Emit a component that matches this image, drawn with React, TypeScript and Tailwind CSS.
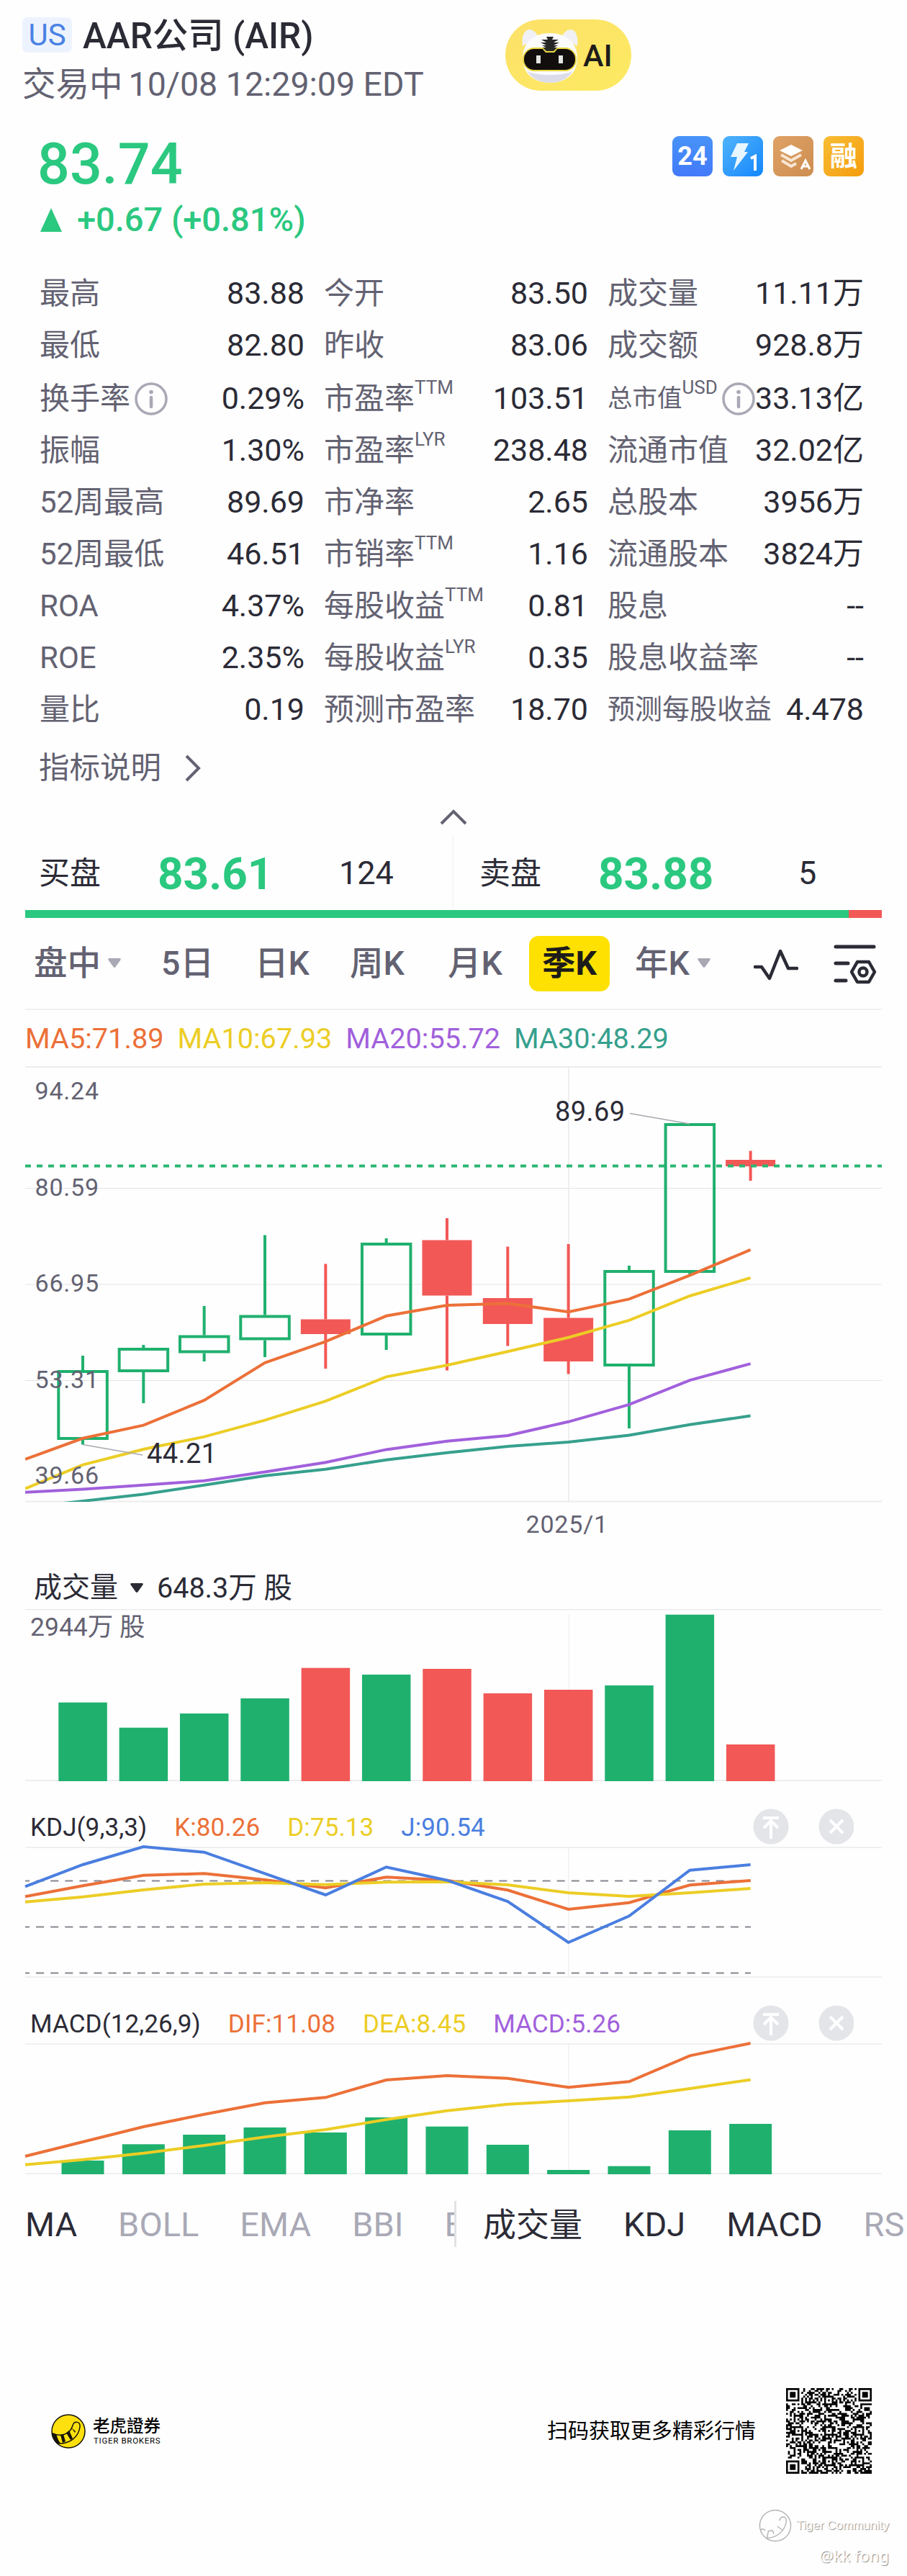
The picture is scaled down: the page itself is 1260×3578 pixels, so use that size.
import type { ReactNode } from "react";

const GREEN = "#1fb06e";
const RED = "#f25856";
const ORANGE = "#ec7038";
const YELLOW = "#eccd25";
const PURPLE = "#a160dc";
const TEAL = "#36a08d";
const BLUE = "#4a7ee0";

// x of every quarter, the first point is the clipped left edge of the chart
const centers = Array.from({ length: 12 }, (_, i) => 115 + i * 84.33);
const lineXs = [35, ...centers];

const toPoints = (ys: number[]) =>
  ys.map((y, i) => `${lineXs[i].toFixed(1)},${y}`).join(" ");

interface Stat {
  label: string;
  sup?: string;
  value: string;
  info?: boolean;
  size?: string;
}

const stats: Stat[][] = [
  [
    { label: "最高", value: "83.88" },
    { label: "今开", value: "83.50" },
    { label: "成交量", value: "11.11万" },
  ],
  [
    { label: "最低", value: "82.80" },
    { label: "昨收", value: "83.06" },
    { label: "成交额", value: "928.8万" },
  ],
  [
    { label: "换手率", value: "0.29%", info: true },
    { label: "市盈率", sup: "TTM", value: "103.51" },
    { label: "总市值", sup: "USD", value: "33.13亿", info: true, size: "text-[34.5px]" },
  ],
  [
    { label: "振幅", value: "1.30%" },
    { label: "市盈率", sup: "LYR", value: "238.48" },
    { label: "流通市值", value: "32.02亿" },
  ],
  [
    { label: "52周最高", value: "89.69" },
    { label: "市净率", value: "2.65" },
    { label: "总股本", value: "3956万" },
  ],
  [
    { label: "52周最低", value: "46.51" },
    { label: "市销率", sup: "TTM", value: "1.16" },
    { label: "流通股本", value: "3824万" },
  ],
  [
    { label: "ROA", value: "4.37%" },
    { label: "每股收益", sup: "TTM", value: "0.81" },
    { label: "股息", value: "--" },
  ],
  [
    { label: "ROE", value: "2.35%" },
    { label: "每股收益", sup: "LYR", value: "0.35" },
    { label: "股息收益率", value: "--" },
  ],
  [
    { label: "量比", value: "0.19" },
    { label: "预测市盈率", value: "18.70" },
    { label: "预测每股收益", value: "4.478", size: "text-[38px]" },
  ],
];

// wick top, body top, body bottom, wick bottom
const candles: { up: boolean; y: [number, number, number, number] }[] = [
  { up: true, y: [1883, 1903, 2000, 2006.5] },
  { up: true, y: [1868, 1872, 1906, 1949] },
  { up: true, y: [1814, 1854.5, 1879.5, 1891] },
  { up: true, y: [1715.5, 1826.5, 1861.5, 1885] },
  { up: false, y: [1755.5, 1832.5, 1853, 1901] },
  { up: true, y: [1720, 1726, 1855, 1875] },
  { up: false, y: [1692, 1722.5, 1799.5, 1903.5] },
  { up: false, y: [1731.5, 1803, 1839, 1869.5] },
  { up: false, y: [1728, 1830.5, 1891, 1908.5] },
  { up: true, y: [1758, 1764, 1898, 1984] },
  { up: true, y: [1560, 1560, 1768, 1770.5] },
  { up: false, y: [1598.5, 1611, 1620, 1640] },
];

const ma5 = [2026.8, 1997.8, 1979.6, 1944.9, 1892.8, 1863.3, 1827.8, 1813, 1810.4, 1822.2, 1804.4, 1771.4, 1735.9];
const ma10 = [2067.6, 2034.6, 2013, 1995.6, 1972.6, 1946.2, 1912.4, 1896.3, 1877.2, 1857.7, 1833.9, 1800, 1774.9];
const ma20 = [2072.8, 2068.5, 2062.8, 2056.8, 2044.6, 2031.2, 2013.4, 2001.7, 1993.9, 1974.8, 1950.9, 1917.1, 1894.1];
const ma30 = [2094, 2085, 2075.4, 2062.8, 2049.8, 2040.7, 2027.7, 2017.7, 2009, 2003, 1993.4, 1978.7, 1966.6];

const volumes = [
  { top: 2364.7, up: true },
  { top: 2399.7, up: true },
  { top: 2380, up: true },
  { top: 2359, up: true },
  { top: 2316.7, up: false },
  { top: 2326, up: true },
  { top: 2318, up: false },
  { top: 2352, up: false },
  { top: 2347, up: false },
  { top: 2341, up: true },
  { top: 2242.7, up: true },
  { top: 2423, up: false },
];

const kLine = [2634.3, 2619.3, 2604.7, 2602.3, 2611, 2622.3, 2607.3, 2611.7, 2625.3, 2652, 2642.7, 2618.3, 2612];
const dLine = [2641.7, 2634.7, 2625, 2617, 2615, 2617.7, 2614.3, 2613.7, 2618, 2629, 2634, 2629, 2623];
const jLine = [2620.3, 2590, 2565, 2572.7, 2602.3, 2632, 2593.3, 2611.7, 2641, 2698, 2661.3, 2597.7, 2590];

const dif = [2995, 2975, 2954, 2936.7, 2920.7, 2913.3, 2889, 2883, 2886.7, 2899.3, 2891.3, 2855.3, 2838];
const dea = [3006.7, 2999.7, 2990.7, 2980, 2968.3, 2958, 2944, 2931.7, 2922.7, 2918, 2912.7, 2901, 2888.7];
const macdBars = [3001, 2978.3, 2965, 2955, 2962, 2941, 2953.7, 2979, 3014, 3008.7, 2959, 2950];

function App() {
  return (
    <div className="flex h-[3578px] w-[1260px] flex-col overflow-hidden bg-[#fefefe] font-['Roboto','Noto_Sans_CJK_SC',sans-serif] whitespace-nowrap text-[#2b2b36]">
      <Header />
      <Price />
      <Stats />
      <BidAsk />
      <PeriodTabs />
      <CandleChart />
      <VolumeChart />
      <KdjChart />
      <MacdChart />
      <IndicatorTabs />
      <Footer />
    </div>
  );
}

function Header() {
  return (
    <header className="flex h-[160px] items-start pl-[31px]">
      <div className="w-[671px] pt-[24px]">
        <div className="flex h-[49px] items-center gap-[15px]">
          <span className="flex h-[49px] w-[69px] items-center justify-center rounded-[7px] bg-[#edf3fe] text-[42px] text-[#4a82e4]">
            US
          </span>
          <h1 className="pt-[4px] text-[49.5px] leading-[49px] font-medium">AAR公司 (AIR)</h1>
        </div>
        <div className="mt-[17px] flex h-[56px] items-center gap-[8px] text-[46.5px] text-[#636272]">
          <span>交易中</span>
          <span>10/08 12:29:09 EDT</span>
        </div>
      </div>
      <div className="mt-[27px] flex h-[99px] w-[175px] items-center rounded-full bg-linear-to-br from-[#fce169] to-[#fdea62] pl-[21px]">
        <TigerBot />
        <span className="ml-[5px] pt-[2px] text-[43px] font-medium text-[#1d1c1a]">AI</span>
      </div>
    </header>
  );
}

function TigerBot() {
  return (
    <svg width="82" height="78" viewBox="0 0 82 78">
      <path d="M3 26C1 12 6 3 12 3C18 3 22 8 25 13ZM79 26C81 12 76 3 70 3C64 3 60 8 57 13Z" fill="#f1f1f5" />
      <path d="M41 8C62 8 79 20 79 43C79 65 62 77 41 77C20 77 3 65 3 43C3 20 20 8 41 8Z" fill="#fbfbfd" />
      <path d="M9 60C18 68 64 68 73 60C66 72 54 77 41 77C28 77 16 72 9 60Z" fill="#dcdce8" />
      <rect x="3" y="28" width="75" height="33" rx="16" fill="#e9d744" />
      <rect x="5" y="30" width="71" height="29" rx="14" fill="#120e0e" />
      <path d="M29 28H53L47 35H35Z" fill="#e9d744" />
      <path d="M31 28H51L46 33H36Z" fill="#2a2a26" />
      <path d="M36 13H46L44 17H53L46 21H54L46 25H52L41 31L30 25H36L28 21H36L29 17H38Z" fill="#262626" />
      <rect x="22" y="39" width="6" height="11" fill="#e4e4e4" />
      <rect x="53" y="39" width="6" height="11" fill="#e4e4e4" />
    </svg>
  );
}

function Price() {
  return (
    <section className="flex h-[211px] justify-between pr-[60px] pl-[52px] text-[#2bc880]">
      <div className="pt-[28px]">
        <div className="text-[79px] leading-[80px] font-medium">83.74</div>
        <div className="mt-[10px] flex h-[54px] items-center text-[47px] font-medium">
          <svg className="mr-[21px] ml-[4px]" width="30" height="33" viewBox="0 0 30 33">
            <path d="M15 0L30 33H0Z" fill="#2bc880" />
          </svg>
          +0.67 (+0.81%)
        </div>
      </div>
      <div className="flex gap-[14px] pt-[29px] text-white">
        <Badge className="bg-linear-to-b from-[#4893f8] to-[#4379fa]">
          <span className="text-[36px] font-bold">24</span>
        </Badge>
        <Badge className="bg-linear-to-br from-[#4fb3fb] to-[#0f86fc]">
          <svg width="56" height="56" viewBox="0 0 56 56">
            <path d="M20 10H36L30 22H35L15 48L20 29H11Z" fill="#e8f6ff" />
            <path d="M39 31L45 28V48" fill="none" stroke="#fff" strokeWidth="4" />
          </svg>
        </Badge>
        <Badge className="bg-linear-to-br from-[#dfa165] to-[#cd8e50]">
          <svg width="56" height="56" viewBox="0 0 56 56">
            <path d="M25 12L41 20L25 28L9 20Z" fill="#fff" />
            <path d="M11 26L25 34L39 26M12 34L25 42L32 38" fill="none" stroke="#f8e6d3" strokeWidth="4" />
            <path d="M39 46L45 34L51 46M41 42H49" fill="none" stroke="#fff" strokeWidth="3" />
          </svg>
        </Badge>
        <Badge className="bg-linear-to-br from-[#f7bd33] to-[#f59c05]">
          <span className="text-[38px] font-bold">融</span>
        </Badge>
      </div>
    </section>
  );
}

function Badge({ className, children }: { className: string; children: ReactNode }) {
  return (
    <div className={`flex size-[56px] items-center justify-center rounded-[9px] leading-none ${className}`}>
      {children}
    </div>
  );
}

function InfoIcon() {
  return (
    <svg className="ml-[6px] shrink-0" width="46" height="46" viewBox="0 0 46 46">
      <circle cx="23" cy="23" r="21" fill="none" stroke="#a9a9b6" strokeWidth="3.5" />
      <circle cx="23" cy="13.5" r="2.8" fill="#a9a9b6" />
      <path d="M23 21V34" stroke="#a9a9b6" strokeWidth="4.5" strokeLinecap="round" />
    </svg>
  );
}

function Stats() {
  return (
    <section>
      {stats.map((row, i) => (
        <div
          key={i}
          className={`grid h-[72px] grid-cols-[368px_367px_356px] gap-x-[27px] pt-[1px] pl-[55px] ${i === 2 ? "mt-[2px]" : ""}`}
        >
          {row.map((s) => (
            <div key={s.label + s.value} className="flex items-center justify-between">
              <div className="flex items-center text-[#636272]">
                <span className={s.size ?? "text-[42px]"}>{s.label}</span>
                {s.sup && <span className="mb-[32px] text-[26px] leading-none">{s.sup}</span>}
                {s.info && <InfoIcon />}
              </div>
              <span className="text-[43px]">{s.value}</span>
            </div>
          ))}
        </div>
      ))}
      <div className="mt-[14px] flex h-[64px] items-center gap-[32px] pl-[54px] text-[42.5px] text-[#636272]">
        指标说明
        <svg width="24" height="38" viewBox="0 0 24 38">
          <path d="M3 2L20 19L3 36" fill="none" stroke="#636272" strokeWidth="4" />
        </svg>
      </div>
      <div className="flex h-[61px] justify-center pt-[25px]">
        <svg width="38" height="22" viewBox="0 0 38 22">
          <path d="M2 20L19 3L36 20" fill="none" stroke="#636272" strokeWidth="4" />
        </svg>
      </div>
    </section>
  );
}

function BidAsk() {
  return (
    <section>
      <div className="flex h-[104px] text-[45px]">
        <div className="flex w-[630px] items-center border-r border-[#f0f0f2] pt-[2px] pl-[54px]">
          <span className="w-[165px] text-[43px]">买盘</span>
          <span className="w-[252px] text-[62px] font-bold text-[#2bc880]">83.61</span>
          <span>124</span>
        </div>
        <div className="flex items-center pt-[2px] pl-[36px]">
          <span className="w-[165px] text-[43px]">卖盘</span>
          <span className="w-[278px] text-[62px] font-bold text-[#2bc880]">83.88</span>
          <span>5</span>
        </div>
      </div>
      <div className="mx-[35px] flex h-[11px]">
        <div className="flex-1 bg-[#2bc880]" />
        <div className="w-[46px] bg-[#f25856]" />
      </div>
    </section>
  );
}

function Caret({ color, className }: { color: string; className: string }) {
  return (
    <svg className={className} width="18" height="14" viewBox="0 0 18 14">
      <path d="M2 0H16Q19 0 17 3L10.5 12Q9 14 7.5 12L1 3Q-1 0 2 0Z" fill={color} />
    </svg>
  );
}

function PeriodTabs() {
  return (
    <section>
      <nav className="mx-[35px] flex h-[128px] items-center border-b-2 border-[#f0f0f0] text-[46.5px] font-medium text-[#636272]">
        <span className="ml-[12px] pt-[2px]">盘中</span>
        <Caret color="#a9a9b6" className="ml-[10px]" />
        <span className="ml-[56px] w-[130px] pt-[2px]">5日</span>
        <span className="w-[132px] pt-[2px]">日K</span>
        <span className="w-[136px] pt-[2px]">周K</span>
        <span className="w-[113px] pt-[2px]">月K</span>
        <span className="flex h-[77px] w-[112px] items-center justify-center rounded-[13px] bg-[#fee100] pt-[2px] font-bold text-[#1d1c1a]">
          季K
        </span>
        <span className="ml-[35px] pt-[2px]">年K</span>
        <Caret color="#a9a9b6" className="ml-[11px]" />
        <svg className="mt-[4px] ml-[60px]" width="62" height="44" viewBox="0 0 62 44">
          <path
            d="M2 25H11L22 41L37 3L48 27H60"
            fill="none"
            stroke="#2b2b36"
            strokeWidth="4.5"
            strokeLinecap="round"
            strokeLinejoin="round"
          />
        </svg>
        <svg
          className="mt-[4px] ml-[49px]"
          width="60"
          height="58"
          viewBox="0 0 60 58"
          fill="none"
          stroke="#2b2b36"
          strokeWidth="5"
          strokeLinecap="round"
        >
          <path d="M3 4H56M3 27H20M3 51H17" />
          <path d="M33 25H49L57 39L49 53H33L25 39Z" strokeWidth="4.5" strokeLinejoin="round" />
          <circle cx="41" cy="39" r="5.5" strokeWidth="4.5" />
        </svg>
      </nav>
      <div className="flex h-[78px] items-center gap-[19px] pt-[2px] pl-[35px] text-[39.7px]">
        <span className="text-[#ec7038]">MA5:71.89</span>
        <span className="text-[#eccd25]">MA10:67.93</span>
        <span className="text-[#a160dc]">MA20:55.72</span>
        <span className="text-[#36a08d]">MA30:48.29</span>
      </div>
    </section>
  );
}

function CandleChart() {
  return (
    <svg className="shrink-0" width="1260" height="659" viewBox="0 1481 1260 659">
      <path d="M35 1482H1225M35 2085.5H1225" stroke="#ececee" strokeWidth="2" />
      <path
        d="M35 1650.5H1225M35 1784H1225M35 1917.5H1225M790 1482V2085"
        stroke="#e4e4e6"
        strokeWidth="1.2"
      />
      {candles.map(({ up, y }, i) => (
        <g key={i} stroke={up ? GREEN : RED} strokeWidth="4" fill={up ? "none" : RED}>
          <path d={`M${centers[i]} ${y[0]}V${y[1]}M${centers[i]} ${y[2]}V${y[3]}`} />
          {up ? (
            <rect x={centers[i] - 33.7} y={y[1] + 2} width="67.5" height={y[2] - y[1] - 4} />
          ) : (
            <rect x={centers[i] - 34.5} y={y[1]} width="69" height={y[2] - y[1]} stroke="none" />
          )}
        </g>
      ))}
      <path d="M35 1619.5H1225" stroke="#2bb673" strokeWidth="4" strokeDasharray="8 8" />
      <clipPath id="plot">
        <rect x="35" y="1482" width="1190" height="604" />
      </clipPath>
      <g fill="none" strokeWidth="4" clipPath="url(#plot)">
        <polyline points={toPoints(ma5)} stroke={ORANGE} />
        <polyline points={toPoints(ma10)} stroke={YELLOW} />
        <polyline points={toPoints(ma20)} stroke={PURPLE} />
        <polyline points={toPoints(ma30)} stroke={TEAL} />
      </g>
      <path d="M115 2006.5L198 2021M875 1546.5L958 1561" stroke="#a9a9b0" strokeWidth="1.5" />
      <g fontSize="34" letterSpacing="0.8" fill="#636272">
        <text x="48.5" y="1527">94.24</text>
        <text x="48.5" y="1660.5">80.59</text>
        <text x="48.5" y="1794">66.95</text>
        <text x="48.5" y="1927.5">53.31</text>
        <text x="48.5" y="2061">39.66</text>
        <text x="730.5" y="2129">2025/1</text>
      </g>
      <g fontSize="38" letterSpacing="0.4" fill="#2b2b36">
        <text x="204" y="2032">44.21</text>
        <text x="771" y="1557">89.69</text>
      </g>
    </svg>
  );
}

function VolumeChart() {
  return (
    <section>
      <div className="flex h-[95px] items-end pl-[47px]">
        <div className="flex h-[61px] items-center pt-[2px] text-[39.5px]">
          <span className="text-[39px]">成交量</span>
          <Caret color="#2b2b36" className="mr-[19px] ml-[17px]" />
          <span>648.3万 股</span>
        </div>
      </div>
      <svg className="block" width="1260" height="245" viewBox="0 2235 1260 245">
        <path d="M35 2235.5H1225M35 2473H1225" stroke="#e8e8ea" strokeWidth="1.5" />
        <path d="M790 2242V2473" stroke="#ececee" />
        {volumes.map(({ top, up }, i) => (
          <rect key={i} x={centers[i] - 33.7} y={top} width="67.5" height={2474 - top} fill={up ? GREEN : RED} />
        ))}
        <text x="42" y="2271.5" fontSize="35.5" fill="#636272">
          2944万 股
        </text>
      </svg>
    </section>
  );
}

function PanelHeader({ children }: { children: ReactNode }) {
  return (
    <div className="flex h-[56px] items-center pr-[74px] pl-[42px] text-[35px] tracking-[0.1px]">
      <div className="flex flex-1 gap-[38px] pt-[4px]">{children}</div>
      <svg width="140" height="50" viewBox="0 0 140 50" fill="none" stroke="#fff" strokeWidth="4">
        <circle cx="25" cy="25" r="24.5" fill="#e4e5e9" stroke="none" />
        <path d="M14 13H36M25 42V19M15 27L25 17L35 27" />
        <circle cx="116" cy="25" r="24.5" fill="#e4e5e9" stroke="none" />
        <path d="M107 16L125 34M125 16L107 34" />
      </svg>
    </div>
  );
}

function KdjChart() {
  return (
    <section className="pt-[29px]">
      <PanelHeader>
        <span>KDJ(9,3,3)</span>
        <span className="text-[#ec7038]">K:80.26</span>
        <span className="text-[#eccd25]">D:75.13</span>
        <span className="text-[#4a7ee0]">J:90.54</span>
      </PanelHeader>
      <svg className="block overflow-visible" width="1260" height="185" viewBox="0 2565 1260 185">
        <path d="M35 2566H1225M35 2746H1225" stroke="#f0f0f0" strokeWidth="2" />
        <path d="M790 2566V2746" stroke="#e8e8ea" />
        <path
          d="M35 2612.5H1043M35 2676.5H1043M35 2740.5H1043"
          stroke="#85858f"
          strokeWidth="2"
          strokeDasharray="11 9.1"
          strokeDashoffset="5"
        />
        <g fill="none" strokeWidth="4">
          <polyline points={toPoints(kLine)} stroke={ORANGE} />
          <polyline points={toPoints(dLine)} stroke={YELLOW} />
          <polyline points={toPoints(jLine)} stroke={BLUE} />
        </g>
      </svg>
    </section>
  );
}

function MacdChart() {
  return (
    <section className="pt-[32px]">
      <PanelHeader>
        <span>MACD(12,26,9)</span>
        <span className="text-[#ec7038]">DIF:11.08</span>
        <span className="text-[#eccd25]">DEA:8.45</span>
        <span className="text-[#a160dc]">MACD:5.26</span>
      </PanelHeader>
      <svg className="block overflow-visible" width="1260" height="184" viewBox="0 2838 1260 184">
        <path d="M35 2839H1225M35 3019H1225" stroke="#f0f0f0" strokeWidth="2" />
        <path d="M790 2839V3019" stroke="#e8e8ea" />
        {macdBars.map((top, i) => (
          <rect key={i} x={centers[i] - 29.5} y={top} width="59" height={3020 - top} fill={GREEN} />
        ))}
        <g fill="none" strokeWidth="4">
          <polyline points={toPoints(dif)} stroke={ORANGE} />
          <polyline points={toPoints(dea)} stroke={YELLOW} />
        </g>
      </svg>
    </section>
  );
}

function IndicatorTabs() {
  return (
    <nav className="flex h-[134px] items-center text-[47px] text-[#a9a9b6]">
      <div className="flex h-[64px] w-[634px] items-center gap-[57px] overflow-hidden border-r-3 border-[#e2e2e6] pt-[2px] pl-[35px]">
        <span className="text-[#2b2b36]">MA</span>
        <span>BOLL</span>
        <span>EMA</span>
        <span>BBI</span>
        <span>E</span>
      </div>
      <div className="flex w-[626px] items-center gap-[57px] overflow-hidden pt-[2px] pl-[37px] text-[#2b2b36]">
        <span className="text-[46px]">成交量</span>
        <span>KDJ</span>
        <span>MACD</span>
        <span className="text-[#a9a9b6]">RS</span>
      </div>
    </nav>
  );
}

const QR_SIZE = 45;

// finder and alignment squares are fixed, the rest is filled from a hash
function isDark(x: number, y: number) {
  const last = QR_SIZE - 7;
  for (const [fx, fy] of [[0, 0], [last, 0], [0, last]]) {
    const dx = x - fx;
    const dy = y - fy;
    if (dx >= -1 && dx <= 7 && dy >= -1 && dy <= 7) {
      const ring = Math.max(Math.abs(dx - 3), Math.abs(dy - 3));
      return ring === 3 || ring <= 1;
    }
  }
  for (const [ax, ay] of [[22, 6], [6, 22], [22, 22], [38, 22], [22, 38], [38, 38]]) {
    const ring = Math.max(Math.abs(x - ax), Math.abs(y - ay));
    if (ring <= 2) return ring !== 1;
  }
  if (x === 6) return y % 2 === 0;
  if (y === 6) return x % 2 === 0;
  let h = (x * 374761393 + y * 668265263) | 0;
  h = Math.imul(h ^ (h >>> 13), 1274126177);
  return ((h ^ (h >>> 16)) & 255) < 130;
}

function QrCode() {
  let d = "";
  for (let y = 0; y < QR_SIZE; y++) {
    for (let x = 0; x < QR_SIZE; x++) {
      if (isDark(x, y)) d += `M${x} ${y}h1v1h-1z`;
    }
  }
  return (
    <svg width="119" height="119" viewBox="0 0 45 45">
      <path d={d} fill="#050505" />
    </svg>
  );
}

function TigerTail() {
  return (
    <svg width="48" height="48" viewBox="0 0 48 48">
      <circle cx="24" cy="24" r="23" fill="#fde00d" stroke="#15120a" strokeWidth="1.5" />
      <path
        d="M2 27C12 32 26 29 30 16C32 9 41 10 40 18C38 32 26 42 9 41"
        fill="none"
        stroke="#15120a"
        strokeWidth="1.5"
      />
      <path
        d="M1 26L7 28L10 36L13 41L8 41C4 37 1 32 1 26ZM13 29L17 28L20 38L16 40ZM21 26L25 23L30 34L27 36ZM28 19L34 24L33 26Z"
        fill="#15120a"
      />
    </svg>
  );
}

function Footer() {
  return (
    <footer className="pt-[161px]">
      <div className="flex h-[119px] items-center pr-[49px] pl-[71px] text-black">
        <TigerTail />
        <div className="ml-[10px] flex-1 pt-[1px] font-['Roboto','Noto_Sans_CJK_TC',sans-serif]">
          <div className="text-[23.5px] leading-[26px] font-medium">老虎證券</div>
          <div className="pl-[1px] text-[11.5px] leading-[14px] tracking-[0.7px]">TIGER BROKERS</div>
        </div>
        <span className="mr-[42px] pt-[2px] text-[29px]">扫码获取更多精彩行情</span>
        <QrCode />
      </div>
      <div className="flex flex-col items-end pt-[49px] pr-[25px] font-['Liberation_Sans','Noto_Sans_CJK_SC',sans-serif]">
        <div className="flex h-[46px] items-center gap-[6px] text-[17px] text-white [text-shadow:1px_1px_1px_#8a8a8a]">
          <svg width="46" height="46" viewBox="0 0 48 48" fill="none" stroke="#b4b4b4" strokeWidth="1.5">
            <circle cx="24" cy="24" r="22.5" />
            <path d="M3 31C4 27 8 30 10 31M12 42L14 32L20 31L22 36M27 25L35 31M30 17C32 9 41 10 40 18C38 32 26 42 12 42" />
          </svg>
          Tiger Community
        </div>
        <div className="h-[40px] font-['Noto_Sans',sans-serif] text-[22px] leading-[36px] text-white [text-shadow:1px_1px_1px_#8a8a8a]">
          @kk fong
        </div>
      </div>
    </footer>
  );
}

export default App;
